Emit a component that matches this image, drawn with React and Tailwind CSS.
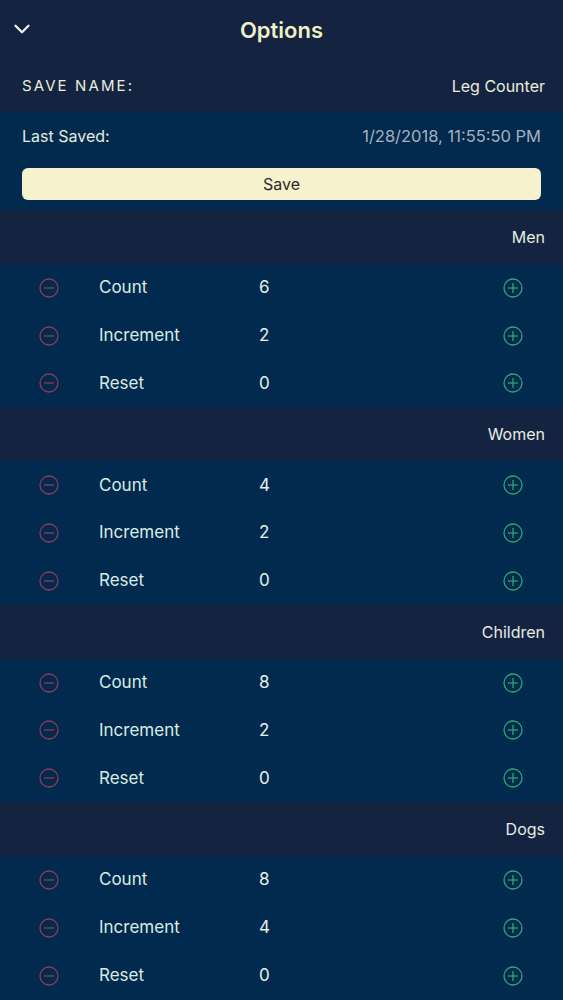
import { ChevronDown } from "lucide-react";

const groups = [
  { name: "Men", count: 6, increment: 2, reset: 0 },
  { name: "Women", count: 4, increment: 2, reset: 0 },
  { name: "Children", count: 8, increment: 2, reset: 0 },
  { name: "Dogs", count: 8, increment: 4, reset: 0 },
];

const MinusIcon = () => (
  <svg width="20" height="20" viewBox="0 0 20 20" fill="none">
    <circle cx="10" cy="10" r="9" stroke="#93395a" strokeWidth="1.3" />
    <line x1="5" y1="10" x2="15" y2="10" stroke="#93395a" strokeWidth="1.3" />
  </svg>
);

const PlusIcon = () => (
  <svg width="20" height="20" viewBox="0 0 20 20" fill="none">
    <circle cx="10" cy="10" r="9" stroke="#2aa872" strokeWidth="1.3" />
    <line x1="5" y1="10" x2="15" y2="10" stroke="#2aa872" strokeWidth="1.3" />
    <line x1="10" y1="5" x2="10" y2="15" stroke="#2aa872" strokeWidth="1.3" />
  </svg>
);

const Row = ({ label, value }) => (
  <div className="h-[47.8px] flex items-center">
    <div className="w-[99px] pl-[39px] flex items-center">
      <MinusIcon />
    </div>
    <span className="w-[160px] text-[17px] text-[#d9ebe4]">{label}</span>
    <span className="flex-1 text-[17px] text-[#e6efe8]">{value}</span>
    <div className="pr-[40px] flex items-center">
      <PlusIcon />
    </div>
  </div>
);

const App = () => {
  return (
    <div
      className="w-[563px] h-[1000px] overflow-hidden bg-[#022a4e]"
      style={{ fontFamily: "Inter, 'Noto Sans', sans-serif" }}
    >
      {/* header */}
      <div className="bg-[#142340]">
        <div className="relative h-[60px] flex items-center justify-center">
          <ChevronDown
            className="absolute left-[9px] top-[16px] text-[#eef0de]"
            size={26}
            strokeWidth={2.2}
          />
          <h1 className="text-[22px] font-semibold text-[#f1efc6]">Options</h1>
        </div>
        <div className="h-[52px] flex items-center justify-between px-[22px] pr-[18px]">
          <span className="text-[15px] tracking-[0.14em] text-[#eceedd]">
            SAVE NAME:
          </span>
          <span className="text-[16px] text-[#eceedd]">Leg Counter</span>
        </div>
      </div>

      {/* last saved */}
      <div className="px-[22px] pb-[10px]">
        <div className="h-[48px] flex items-center justify-between">
          <span className="text-[16px] text-[#e6ecdf]">Last Saved:</span>
          <span className="text-[16.5px] text-[#a6b1bd]">
            1/28/2018, 11:55:50 PM
          </span>
        </div>
        <button className="mt-[8px] w-full h-[32px] rounded-[6px] bg-[#f5f2cd] text-[16px] text-[#2a2a2a]">
          Save
        </button>
      </div>

      {groups.map((g) => (
        <div key={g.name}>
          <div className="h-[54px] bg-[#142340] flex items-center justify-end pr-[18px]">
            <span className="text-[16px] text-[#e8ede2]">{g.name}</span>
          </div>
          <Row label="Count" value={g.count} />
          <Row label="Increment" value={g.increment} />
          <Row label="Reset" value={g.reset} />
        </div>
      ))}
    </div>
  );
};

export default App;
